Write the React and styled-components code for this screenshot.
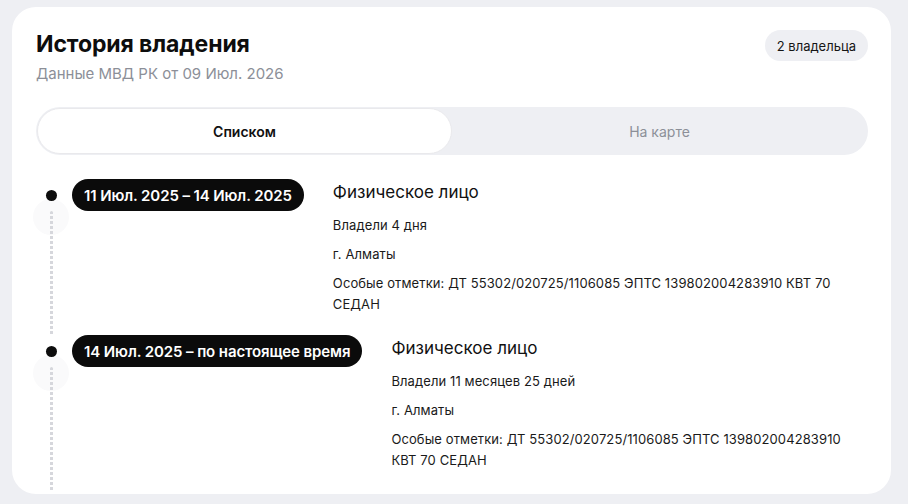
import React from "react";
import styled, { createGlobalStyle } from "styled-components";

const GlobalStyle = createGlobalStyle`
  html, body {
    margin: 0;
    padding: 0;
    background: #eeeff3;
    font-family: Inter, "Noto Sans", sans-serif;
    color: #111;
  }
`;

const Page = styled.div`
  padding: 7px 17px 0 12px;
`;

const Card = styled.section`
  background: #fff;
  border-radius: 24px;
  height: 487px;
  overflow: hidden;
  padding: 24px 23px 0 24px;
  box-sizing: border-box;
`;

const Header = styled.header`
  display: flex;
  justify-content: space-between;
  align-items: flex-start;
`;

const Title = styled.h1`
  margin: 0;
  font-size: 23px;
  line-height: 26px;
  font-weight: 700;
  letter-spacing: -0.1px;
  color: #0d0d0d;
`;

const Subtitle = styled.p`
  margin: 7px 0 0;
  font-size: 15px;
  line-height: 20px;
  color: #8c8f98;
`;

const Badge = styled.span`
  margin-top: -1px;
  height: 31px;
  padding: 0 12px;
  display: inline-flex;
  align-items: center;
  border-radius: 16px;
  background: #eeeff3;
  font-size: 13px;
  color: #151515;
`;

const Tabs = styled.div`
  margin-top: 23px;
  display: grid;
  grid-template-columns: 1fr 1fr;
  background: #eeeff3;
  border-radius: 24px;
  padding: 1px;
  height: 48px;
  box-sizing: border-box;
`;

const Tab = styled.button`
  border: ${(p) => (p.$active ? "1px solid #e9e9ec" : "none")};
  background: ${(p) => (p.$active ? "#fff" : "transparent")};
  border-radius: 23px;
  font-family: inherit;
  font-size: 14px;
  font-weight: ${(p) => (p.$active ? 600 : 400)};
  color: ${(p) => (p.$active ? "#111" : "#8c8f98")};
  cursor: pointer;
`;

const Timeline = styled.div`
  margin-top: 24px;
`;

const Entry = styled.div`
  display: flex;
  align-items: stretch;
  padding-bottom: 20px;
`;

const Rail = styled.div`
  position: relative;
  width: 30px;
  flex: none;
  display: flex;
  flex-direction: column;
  align-items: center;
  padding-top: 11px;
  margin-bottom: -20px;
  margin-right: 6px;

  &::after {
    content: "";
    position: absolute;
    top: 20px;
    left: -3px;
    width: 36px;
    height: 36px;
    border-radius: 50%;
    background: #fafafb;
    z-index: 0;
  }
`;

const Dot = styled.span`
  width: 11px;
  height: 11px;
  border-radius: 50%;
  background: #0d0d0d;
  position: relative;
  z-index: 1;
`;

const Dashes = styled.span`
  flex: 1;
  width: 3px;
  margin-top: 10px;
  position: relative;
  z-index: 1;
  background-image: repeating-linear-gradient(
    to bottom,
    #d6d7dc 0 3px,
    transparent 3px 5px
  );
  border-radius: 2px;
`;

const Period = styled.span`
  flex: none;
  align-self: flex-start;
  height: 32px;
  padding: 0 12px;
  display: inline-flex;
  align-items: center;
  border-radius: 16px;
  background: #0b0b0b;
  color: #fff;
  font-size: 15px;
  font-weight: 600;
  letter-spacing: -0.1px;
  white-space: nowrap;
`;

const Info = styled.div`
  flex: 1;
  margin-left: 29px;
`;

const Owner = styled.div`
  font-size: 17px;
  line-height: 26px;
  color: #111;
`;

const Line = styled.p`
  margin: 8px 0 0;
  font-size: 13px;
  line-height: 21px;
  letter-spacing: 0.1px;
  color: #1a1a1a;
  &:first-of-type {
    margin-top: 10px;
  }
`;

const owners = [
  {
    period: "11 Июл. 2025 – 14 Июл. 2025",
    type: "Физическое лицо",
    lines: [
      "Владели 4 дня",
      "г. Алматы",
      "Особые отметки: ДТ 55302/020725/1106085 ЭПТС 139802004283910 КВТ 70 СЕДАН",
    ],
  },
  {
    period: "14 Июл. 2025 – по настоящее время",
    type: "Физическое лицо",
    lines: [
      "Владели 11 месяцев 25 дней",
      "г. Алматы",
      "Особые отметки: ДТ 55302/020725/1106085 ЭПТС 139802004283910 КВТ 70 СЕДАН",
    ],
  },
];

export default function App() {
  return (
    <Page>
      <GlobalStyle />
      <Card>
        <Header>
          <div>
            <Title>История владения</Title>
            <Subtitle>Данные МВД РК от 09 Июл. 2026</Subtitle>
          </div>
          <Badge>2 владельца</Badge>
        </Header>
        <Tabs>
          <Tab $active>Списком</Tab>
          <Tab>На карте</Tab>
        </Tabs>
        <Timeline>
          {owners.map((o) => (
            <Entry key={o.period}>
              <Rail>
                <Dot />
                <Dashes />
              </Rail>
              <Period>{o.period}</Period>
              <Info>
                <Owner>{o.type}</Owner>
                {o.lines.map((l) => (
                  <Line key={l}>{l}</Line>
                ))}
              </Info>
            </Entry>
          ))}
        </Timeline>
      </Card>
    </Page>
  );
}
